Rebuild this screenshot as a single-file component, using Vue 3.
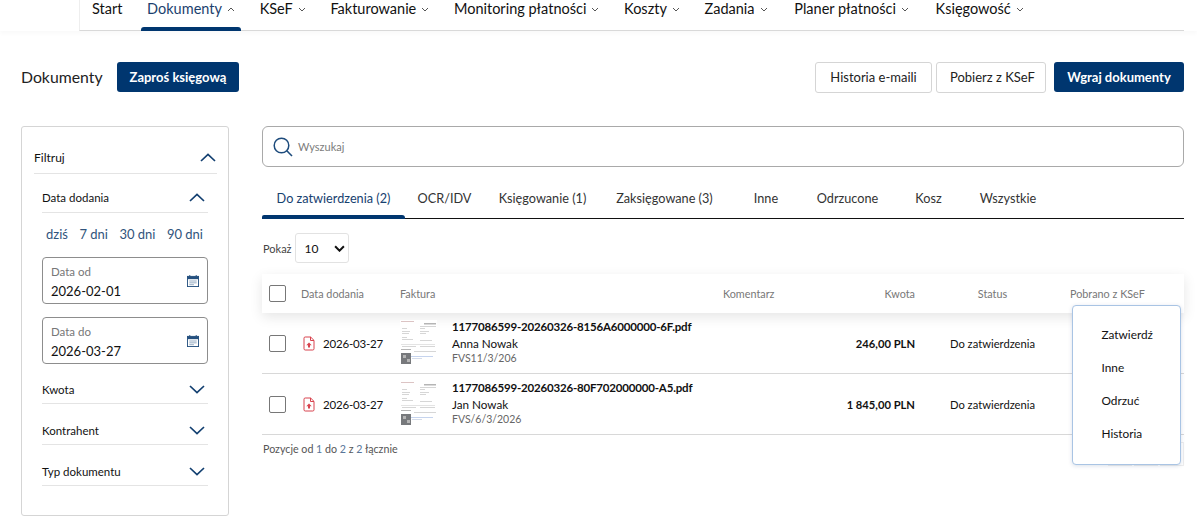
<script setup>
const nav = [
  { label: 'Start' },
  { label: 'Dokumenty', caret: 'up', active: true },
  { label: 'KSeF', caret: 'down' },
  { label: 'Fakturowanie', caret: 'down' },
  { label: 'Monitoring płatności', caret: 'down' },
  { label: 'Koszty', caret: 'down' },
  { label: 'Zadania', caret: 'down' },
  { label: 'Planer płatności', caret: 'down' },
  { label: 'Księgowość', caret: 'down' }
]
const tabs = [
  { label: 'Do zatwierdzenia (2)', w: 143, active: true },
  { label: 'OCR/IDV', w: 79 },
  { label: 'Księgowanie (1)', w: 117 },
  { label: 'Zaksięgowane (3)', w: 127 },
  { label: 'Inne', w: 76 },
  { label: 'Odrzucone', w: 87 },
  { label: 'Kosz', w: 75 },
  { label: 'Wszystkie', w: 84 }
]
const rows = [
  { file: '1177086599-20260326-8156A6000000-6F.pdf', name: 'Anna Nowak', no: 'FVS11/3/206', amount: '246,00 PLN' },
  { file: '1177086599-20260326-80F702000000-A5.pdf', name: 'Jan Nowak', no: 'FVS/6/3/2026', amount: '1 845,00 PLN' }
]
const menu = ['Zatwierdź', 'Inne', 'Odrzuć', 'Historia']
const closed = ['Kwota', 'Kontrahent', 'Typ dokumentu']
const quick = ['dziś', '7 dni', '30 dni', '90 dni']
const dates = [
  { label: 'Data od', value: '2026-02-01' },
  { label: 'Data do', value: '2026-03-27' }
]
</script>

<template>
  <div class="page">
    <div class="topbar">
      <nav class="nav">
        <a v-for="n in nav" :key="n.label" class="nav-item" :class="{ active: n.active }">
          {{ n.label }}
          <svg v-if="n.caret" class="caret" viewBox="0 0 8 5" width="8" height="5">
            <path :d="n.caret === 'up' ? 'M1 4l3-3 3 3' : 'M1 1l3 3 3-3'" fill="none" stroke="currentColor" stroke-width="1" />
          </svg>
        </a>
      </nav>
    </div>

    <header class="head">
      <h1 class="title">Dokumenty</h1>
      <button class="btn primary">Zaproś księgową</button>
      <div class="head-right">
        <button class="btn ghost w116">Historia e-maili</button>
        <button class="btn ghost w110">Pobierz z KSeF</button>
        <button class="btn primary w130">Wgraj dokumenty</button>
      </div>
    </header>

    <div class="content">
      <aside class="side">
        <div class="filter-head">
          <span>Filtruj</span>
          <svg class="chev" viewBox="0 0 16 9" width="16" height="9"><path d="M1 8l7-6.5L15 8" /></svg>
        </div>
        <div class="group">
          <div class="group-head">
            <span>Data dodania</span>
            <svg class="chev" viewBox="0 0 16 9" width="16" height="9"><path d="M1 8l7-6.5L15 8" /></svg>
          </div>
          <div class="quick">
            <a v-for="q in quick" :key="q">{{ q }}</a>
          </div>
          <div v-for="d in dates" :key="d.label" class="date">
            <div class="date-text">
              <span class="date-label">{{ d.label }}</span>
              <span class="date-value">{{ d.value }}</span>
            </div>
            <svg class="cal" viewBox="0 0 13 13" width="12" height="12">
              <rect x="0.5" y="1.5" width="12" height="11" fill="none" stroke="#24507f" />
              <rect x="0.5" y="1.5" width="12" height="3" fill="#24507f" />
              <path d="M3 0v2M10 0v2" stroke="#24507f" />
              <path d="M2.500 6.500h8M2.500 8.500h8M2.500 10.500h5" stroke="#8ea6bf" />
            </svg>
          </div>
          <div v-for="c in closed" :key="c" class="group-head closed">
            <span>{{ c }}</span>
            <svg class="chev" viewBox="0 0 16 9" width="16" height="9"><path d="M1 1l7 6.500L15 1" /></svg>
          </div>
        </div>
      </aside>

      <main class="main">
        <div class="search">
          <svg viewBox="0 0 20 20" width="20" height="20">
            <circle cx="8.500" cy="8.500" r="7.300" fill="none" stroke="#1d4b7c" stroke-width="1.500" />
            <path d="M13.800 13.800L19 19" stroke="#1d4b7c" stroke-width="1.600" />
          </svg>
          <span>Wyszukaj</span>
        </div>

        <div class="tabs">
          <a
            v-for="t in tabs"
            :key="t.label"
            class="tab"
            :class="{ active: t.active }"
            :style="{ width: t.w + 'px' }"
          >{{ t.label }}</a>
        </div>

        <div class="show">
          <span>Pokaż</span>
          <div class="select">
            <span>10</span>
            <svg viewBox="0 0 10 6" width="11" height="7"><path d="M1 1l4 4 4-4" fill="none" stroke="#111" stroke-width="1.800" /></svg>
          </div>
        </div>

        <div class="grid thead">
          <span class="box"></span>
          <span>Data dodania</span>
          <span>Faktura</span>
          <span>Komentarz</span>
          <span class="right">Kwota</span>
          <span class="center">Status</span>
          <span>Pobrano z KSeF</span>
        </div>
        <div v-for="r in rows" :key="r.file" class="grid row">
          <span class="box"></span>
          <span class="when">
            <svg viewBox="0 0 12 15" width="12" height="15">
              <path d="M1 2.200a1.200 1.200 0 0 1 1.200-1.200H7.600L11 4.400v8.400a1.200 1.200 0 0 1-1.200 1.200H2.200A1.200 1.200 0 0 1 1 12.800z" fill="none" stroke="#d8434e" />
              <path d="M7.500 1v3.500H11" fill="none" stroke="#d8434e" />
              <path d="M6 6.500l-2.700 2.800h1.700v2.200h2V9.300h1.700z" fill="#d8434e" />
            </svg>
            2026-03-27
          </span>
          <div class="invoice">
            <svg class="thumb" viewBox="0 0 37 46" width="37" height="46">
              <rect width="37" height="46" fill="#fff" />
              <g fill="#d6d6d6">
                <rect x="1" y="1" width="13" height="1" fill="#dcc4c4" />
                <rect x="24" y="3" width="12" height="1.500" fill="#b5b5b5" />
                <rect x="20" y="6" width="16" height="1" />
                <rect x="2" y="8" width="5" height="1" />
                <rect x="20" y="8" width="5" height="1" />
                <rect x="2" y="11" width="8" height="1" />
                <rect x="20" y="11" width="9" height="1" />
                <rect x="2" y="13" width="7" height="1" />
                <rect x="20" y="13" width="6" height="1" />
                <rect x="2" y="17" width="5" height="1" />
                <rect x="2" y="19" width="11" height="1" />
                <rect x="20" y="20" width="12" height="1" />
                <rect x="1" y="24" width="34" height="1" fill="#e4e4e4" />
                <rect x="2" y="26" width="14" height="1" />
                <rect x="20" y="26" width="15" height="1" />
                <rect x="1" y="29" width="10" height="1" fill="#b5b5b5" />
                <rect x="14" y="31" width="22" height="1" />
              </g>
              <rect x="1" y="33" width="10" height="11" fill="#77797c" />
              <rect x="3" y="35" width="3" height="3" fill="#b5b5b5" />
              <rect x="7" y="39" width="3" height="3" fill="#b5b5b5" />
              <rect x="11" y="36" width="22" height="1" fill="#c6d4ee" />
              <rect x="12" y="38" width="10" height="1" fill="#d5dcea" />
            </svg>
            <div class="inv-text">
              <strong>{{ r.file }}</strong>
              <span class="inv-name">{{ r.name }}</span>
              <span class="inv-no">{{ r.no }}</span>
            </div>
          </div>
          <span></span>
          <strong class="right amount">{{ r.amount }}</strong>
          <span class="center st">Do zatwierdzenia</span>
          <span></span>
        </div>

        <div class="foot">
          <span>Pozycje od <i>1</i> do <i>2</i> z <i>2</i> łącznie</span>
          <div class="pager"><b></b><b></b><b></b></div>
        </div>
      </main>
    </div>

    <ul class="menu">
      <li v-for="m in menu" :key="m">{{ m }}</li>
    </ul>
  </div>
</template>

<style scoped>
.page {
  position: relative;
  width: 1197px;
  height: 522px;
  overflow: hidden;
  background: #fff;
  font-family: Lato, "Noto Sans", sans-serif;
  color: #111;
}
button { font-family: inherit; cursor: pointer; }
.topbar { box-shadow: 0 3px 4px rgba(0, 0, 0, 0.025); }
.nav {
  display: flex;
  gap: 11.700px;
  margin-left: 79px;
  width: 1105px;
  height: 31px;
  box-sizing: border-box;
  padding-left: 5px;
  border-left: 1px solid #eee;
  border-bottom: 1px solid #d9d9d9;
}
.nav-item {
  position: relative;
  display: flex;
  align-items: flex-start;
  height: 30px;
  padding: 0 6px 0 7px;
  gap: 5px;
  font-size: 14.500px;
  line-height: 18px;
  white-space: nowrap;
}
.nav-item:nth-last-child(2),
.nav-item:last-child { margin-left: 2px; }
.caret { margin-top: 7px; color: #555; }
.nav-item.active { color: #1b3f6e; }
.nav-item.active::after {
  content: "";
  position: absolute;
  left: 1px;
  right: 0;
  bottom: -1px;
  height: 4px;
  background: #00366f;
  border-radius: 3px 3px 0 0;
}
.head {
  display: flex;
  align-items: center;
  gap: 14px;
  height: 30px;
  margin: 31px 13px 0 21px;
}
.title {
  margin: -2px 0 0;
  font-size: 15.800px;
  font-weight: 400;
  color: #222;
}
.btn {
  height: 30px;
  padding: 0 13px;
  border-radius: 3px;
  font-size: 13px;
  box-sizing: border-box;
  white-space: nowrap;
}
.primary { background: #00366f; border: 0; color: #fff; font-weight: 700; }
.ghost { background: #fff; border: 1px solid #d5d5d5; color: #222; }
.head-right { display: flex; gap: 4px; margin-left: auto; }
.head-right .ghost { height: 31px; }
.w116 { width: 117px; }
.w110 { width: 110px; }
.w130 { width: 130px; margin-left: 4px; }
.content {
  display: flex;
  gap: 33px;
  margin: 34px 13px 0 21px;
  align-items: flex-start;
}
.side {
  width: 208px;
  height: 390px;
  box-sizing: border-box;
  padding: 12px 11px 0 12px;
  border: 1px solid #d5d5d5;
  border-radius: 3px;
}
.filter-head {
  display: flex;
  justify-content: space-between;
  align-items: center;
  height: 35px;
  box-sizing: border-box;
  padding: 3px 1px 0 0;
  border-bottom: 1px solid #e4e4e4;
  font-size: 12px;
}
.group { padding: 0 9px 0 8px; }
.group-head {
  display: flex;
  justify-content: space-between;
  align-items: flex-end;
  height: 39px;
  padding: 0 3px 7px 0;
  box-sizing: border-box;
  border-bottom: 1px solid #e4e4e4;
  font-size: 11.500px;
  line-height: 15px;
}
.group-head .chev { margin-bottom: 3px; }
.group-head.closed { height: 41px; padding-bottom: 6px; }
.date + .group-head.closed { height: 40px; }
.chev { fill: none; stroke: #123f70; stroke-width: 1.700; }
.quick {
  display: flex;
  justify-content: space-between;
  padding: 0 5px 0 4px;
  margin-top: 13px;
  margin-bottom: 14px;
  font-size: 13px;
  line-height: 17px;
  color: #31547c;
}
.date {
  display: flex;
  align-items: center;
  justify-content: space-between;
  height: 47px;
  margin-bottom: 13px;
  padding: 0 8px 0 8px;
  box-sizing: border-box;
  border: 1px solid #8d8d8d;
  border-radius: 4px;
}
.date + .group-head { margin-top: -13px; }
.date-text { display: flex; flex-direction: column; gap: 4px; padding-top: 2px; }
.date-label { font-size: 11.500px; line-height: 14px; color: #777; }
.date-value { font-size: 13px; line-height: 16px; }
.main { width: 922px; }
.search {
  display: flex;
  align-items: center;
  gap: 5px;
  height: 41px;
  box-sizing: border-box;
  padding-left: 10px;
  border: 1px solid #a9a9a9;
  border-radius: 6px;
  font-size: 11px;
  color: #7c7c7c;
}
.tabs {
  display: flex;
  height: 37px;
  margin-top: 14px;
  border-bottom: 1px solid #111;
}
.tab {
  position: relative;
  box-sizing: border-box;
  padding-top: 9px;
  text-align: center;
  font-size: 12.700px;
  line-height: 17px;
  color: #333;
  white-space: nowrap;
}
.tab.active { color: #17416f; }
.tab.active::after {
  content: "";
  position: absolute;
  left: 0;
  right: 0;
  bottom: -1px;
  height: 4px;
  background: #00366f;
  border-radius: 2px 3px 0 0;
}
.show {
  display: flex;
  align-items: center;
  gap: 3px;
  margin-top: 14px;
  padding-left: 1px;
  font-size: 11px;
  color: #444;
}
.select {
  display: flex;
  align-items: center;
  justify-content: space-between;
  width: 54px;
  height: 30px;
  box-sizing: border-box;
  padding: 0 3px 0 9px;
  border: 1px solid #e2e2e2;
  border-radius: 3px;
  color: #111;
  font-size: 12px;
}
.grid {
  display: grid;
  grid-template-columns: 39px 99px 323px 100px 92px 155px 114px;
  align-items: center;
  font-size: 10.800px;
}
.thead {
  height: 39px;
  margin-top: 11px;
  color: #777;
  background: #fff;
  box-shadow: 0 4px 12px rgba(0, 0, 0, 0.1);
  position: relative;
}
.box {
  display: block;
  width: 17px;
  height: 17px;
  margin-left: 7px;
  box-sizing: border-box;
  border: 1px solid #777;
  border-radius: 2px;
  background: #fff;
}
.right { text-align: right; }
.center { text-align: center; }
.row {
  height: 61px;
  box-sizing: border-box;
  border-bottom: 1px solid #d8d8d8;
  font-size: 12px;
}
.when {
  display: flex;
  align-items: center;
  gap: 8px;
  padding-left: 2px;
  font-size: 11.500px;
  letter-spacing: -0.200px;
}
.invoice { display: flex; align-items: center; gap: 15px; }
.thumb { flex-shrink: 0; filter: blur(0.350px); }
.inv-text { display: flex; flex-direction: column; margin-top: -1px; }
.inv-text strong {
  font-size: 11.500px;
  line-height: 16px;
  font-weight: 700;
  letter-spacing: -0.180px;
  white-space: nowrap;
}
.inv-name { font-size: 11.700px; line-height: 16px; }
.inv-no { font-size: 10.500px; line-height: 15px; color: #666; }
.amount { font-size: 11.200px; }
.st { font-size: 11.200px; }
.foot {
  display: flex;
  justify-content: space-between;
  align-items: flex-start;
  padding: 7px 0 0 1px;
  font-size: 10.700px;
  line-height: 14px;
  color: #555;
}
.foot i { font-style: normal; color: #5a7699; }
.pager { display: flex; gap: 2px; }
.pager b {
  display: block;
  width: 24px;
  height: 24px;
  border: 1px solid #eee;
  box-sizing: border-box;
}
.menu {
  position: absolute;
  left: 1072px;
  top: 305px;
  width: 109px;
  height: 160px;
  box-sizing: border-box;
  margin: 0;
  padding: 12px 0 0 28.500px;
  list-style: none;
  background: #fff;
  border: 1px solid #a9c4e4;
  border-radius: 4px;
  box-shadow: 0 1px 4px rgba(0, 50, 110, 0.15);
  font-size: 11.800px;
}
.menu li { height: 33px; line-height: 33px; }
</style>
